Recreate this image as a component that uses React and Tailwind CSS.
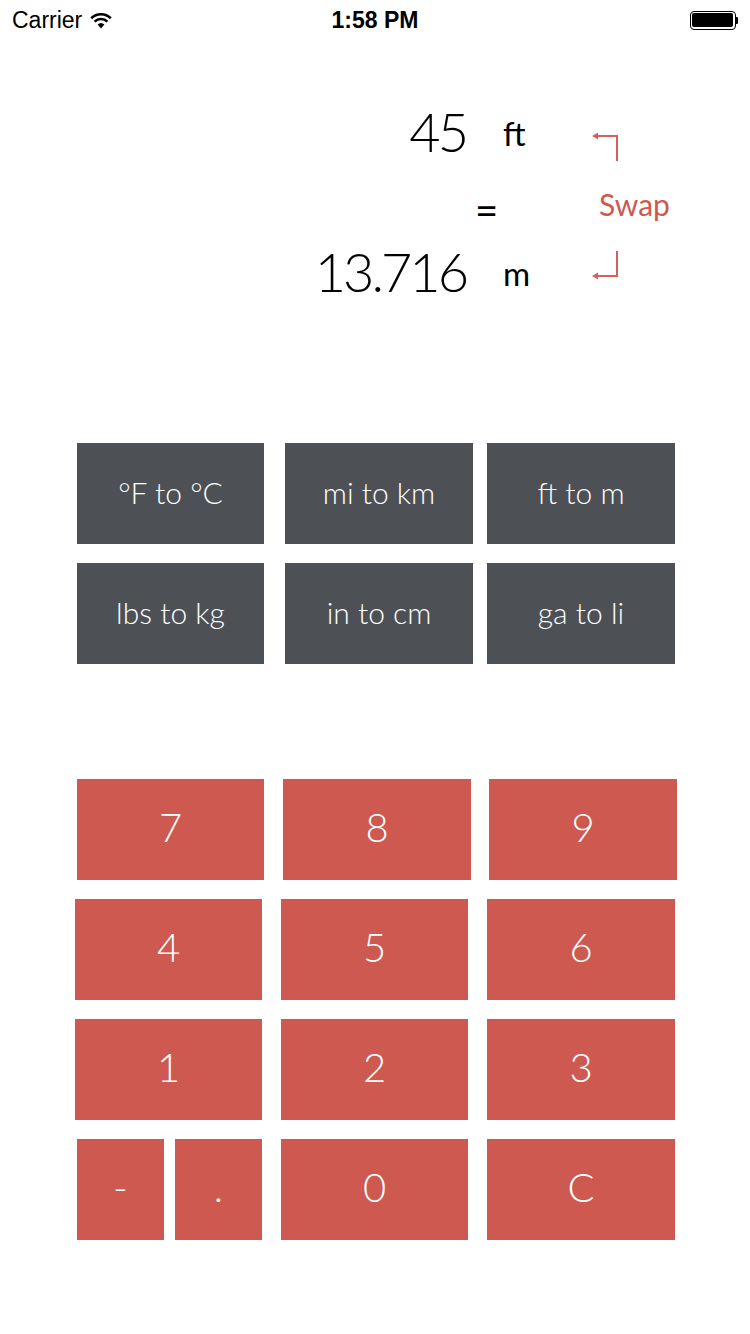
import React from "react";

const RED = "bg-[#cd5950]";
const GRAY = "bg-[#4d5155]";

function ConvBtn({ w, label }) {
  return (
    <div
      className={`${GRAY} h-[101px] flex items-center justify-center text-white text-[30px] font-light pb-[3px]`}
      style={{ width: w }}
    >
      {label}
    </div>
  );
}

function Key({ w, label }) {
  return (
    <div
      className={`${RED} h-[101px] flex items-center justify-center text-white text-[40px] font-light pb-[6px]`}
      style={{ width: w }}
    >
      {label}
    </div>
  );
}

function Wifi() {
  return (
    <svg width="24" height="18" viewBox="0 0 24 18" className="ml-[7px]">
      <path d="M12 17.5 L8.6 13.6 A5 5 0 0 1 15.4 13.6 Z" fill="#000" />
      <path d="M5.6 10.6 A9 9 0 0 1 18.4 10.6" stroke="#000" strokeWidth="2.6" fill="none" />
      <path d="M2.2 7.2 A14 14 0 0 1 21.8 7.2" stroke="#000" strokeWidth="2.6" fill="none" />
    </svg>
  );
}

function Battery() {
  return (
    <div className="flex items-center">
      <div className="w-[46px] h-[19px] rounded-[4px] border-[1.5px] border-black p-[1.5px]">
        <div className="w-full h-full bg-black rounded-[2px]" />
      </div>
      <div className="w-[2.5px] h-[7px] bg-black rounded-r-[1px]" />
    </div>
  );
}

export default function App() {
  return (
    <div
      className="w-[750px] min-h-[1334px] bg-white relative"
      style={{ fontFamily: "Lato, 'Open Sans', sans-serif" }}
    >
      {/* status bar */}
      <div
        className="h-[40px] flex items-center justify-between px-[12px] text-black"
        style={{ fontFamily: "'Liberation Sans', Arial, sans-serif" }}
      >
        <div className="flex items-center w-[200px] text-[23px]">
          Carrier
          <Wifi />
        </div>
        <div className="text-[23px] font-bold">1:58 PM</div>
        <div className="w-[200px] flex justify-end">
          <Battery />
        </div>
      </div>

      {/* display */}
      <div className="h-[403px] flex items-start">
        <div className="w-[590px] pt-[57px] flex flex-col">
          <div className="flex items-center h-[70px]">
            <div className="w-[466px] text-right text-[54px] font-light leading-[70px] text-black tracking-[-3px]">45</div>
            <div className="ml-[37px] text-[33px] leading-[70px] text-black pt-[2px]">ft</div>
          </div>
          <div className="flex items-center h-[70px]">
            <div className="w-[475px]" />
            <div className="text-[40px] leading-[70px] text-black pt-[16px]">=</div>
          </div>
          <div className="flex items-center h-[70px]">
            <div className="w-[466px] text-right text-[54px] font-light leading-[70px] text-black tracking-[-3px]">13.716</div>
            <div className="ml-[37px] text-[33px] leading-[70px] text-black pt-[1px]">m</div>
          </div>
        </div>
        <div className="pt-[93px] flex flex-col">
          <svg width="32" height="31" viewBox="0 0 32 31">
            <path d="M6 3 L27 3 L27 28" stroke="#d4625a" strokeWidth="2" fill="none" />
            <polygon points="2,3 8,-0.5 8,6.5" fill="#d4625a" />
          </svg>
          <div className="mt-[25px] h-[30px] ml-[9px] text-[30px] leading-[30px] text-[#cd5950]">Swap</div>
          <svg width="32" height="31" viewBox="0 0 32 31" className="mt-[30px]">
            <path d="M27 2 L27 27 L6 27" stroke="#d4625a" strokeWidth="2" fill="none" />
            <polygon points="2,27 8,23.5 8,30.5" fill="#d4625a" />
          </svg>
        </div>
      </div>

      {/* conversions */}
      <div className="flex flex-col gap-[19px]">
        <div className="flex pl-[77px]">
          <ConvBtn w={187} label="°F to °C" />
          <div className="w-[21px]" />
          <ConvBtn w={188} label="mi to km" />
          <div className="w-[14px]" />
          <ConvBtn w={188} label="ft to m" />
        </div>
        <div className="flex pl-[77px]">
          <ConvBtn w={187} label="lbs to kg" />
          <div className="w-[21px]" />
          <ConvBtn w={188} label="in to cm" />
          <div className="w-[14px]" />
          <ConvBtn w={188} label="ga to li" />
        </div>
      </div>

      {/* keypad */}
      <div className="mt-[115px] flex flex-col gap-[19px]">
        <div className="flex pl-[77px]">
          <Key w={187} label="7" />
          <div className="w-[19px]" />
          <Key w={188} label="8" />
          <div className="w-[18px]" />
          <Key w={188} label="9" />
        </div>
        <div className="flex pl-[75px]">
          <Key w={187} label="4" />
          <div className="w-[19px]" />
          <Key w={187} label="5" />
          <div className="w-[19px]" />
          <Key w={188} label="6" />
        </div>
        <div className="flex pl-[75px]">
          <Key w={187} label="1" />
          <div className="w-[19px]" />
          <Key w={187} label="2" />
          <div className="w-[19px]" />
          <Key w={188} label="3" />
        </div>
        <div className="flex pl-[77px]">
          <Key w={87} label="-" />
          <div className="w-[11px]" />
          <Key w={87} label="." />
          <div className="w-[19px]" />
          <Key w={187} label="0" />
          <div className="w-[19px]" />
          <Key w={188} label="C" />
        </div>
      </div>
    </div>
  );
}
